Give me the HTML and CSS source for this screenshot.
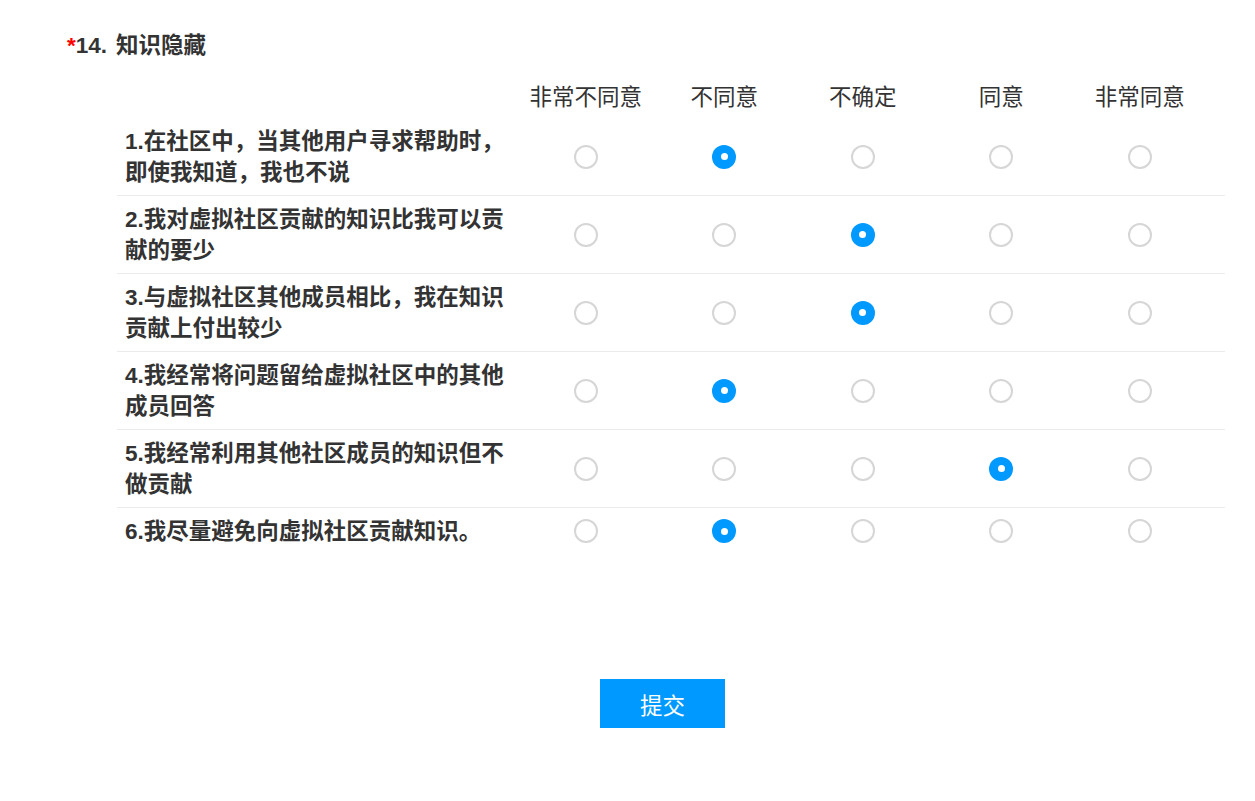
FILE: index.html
```html
<!DOCTYPE html>
<html lang="zh-CN">
<head>
<meta charset="utf-8">
<title>知识隐藏</title>
<link rel="stylesheet" href="styles.css">
</head>
<body>
<div class="page">
  <div class="title"><span class="req">*</span>14.<span class="title-text">知识隐藏</span></div>
  <div class="matrix">
    <div class="row head">
      <div class="label"></div>
      <div class="opt">非常不同意</div>
      <div class="opt">不同意</div>
      <div class="opt">不确定</div>
      <div class="opt">同意</div>
      <div class="opt">非常同意</div>
    </div>
    <div class="row item">
      <div class="label">1.在社区中，当其他用户寻求帮助时，即使我知道，我也不说</div>
      <div class="opt"><span class="radio"></span></div>
      <div class="opt"><span class="radio on"></span></div>
      <div class="opt"><span class="radio"></span></div>
      <div class="opt"><span class="radio"></span></div>
      <div class="opt"><span class="radio"></span></div>
    </div>
    <div class="row item">
      <div class="label">2.我对虚拟社区贡献的知识比我可以贡献的要少</div>
      <div class="opt"><span class="radio"></span></div>
      <div class="opt"><span class="radio"></span></div>
      <div class="opt"><span class="radio on"></span></div>
      <div class="opt"><span class="radio"></span></div>
      <div class="opt"><span class="radio"></span></div>
    </div>
    <div class="row item">
      <div class="label">3.与虚拟社区其他成员相比，我在知识贡献上付出较少</div>
      <div class="opt"><span class="radio"></span></div>
      <div class="opt"><span class="radio"></span></div>
      <div class="opt"><span class="radio on"></span></div>
      <div class="opt"><span class="radio"></span></div>
      <div class="opt"><span class="radio"></span></div>
    </div>
    <div class="row item">
      <div class="label">4.我经常将问题留给虚拟社区中的其他成员回答</div>
      <div class="opt"><span class="radio"></span></div>
      <div class="opt"><span class="radio on"></span></div>
      <div class="opt"><span class="radio"></span></div>
      <div class="opt"><span class="radio"></span></div>
      <div class="opt"><span class="radio"></span></div>
    </div>
    <div class="row item">
      <div class="label">5.我经常利用其他社区成员的知识但不做贡献</div>
      <div class="opt"><span class="radio"></span></div>
      <div class="opt"><span class="radio"></span></div>
      <div class="opt"><span class="radio"></span></div>
      <div class="opt"><span class="radio on"></span></div>
      <div class="opt"><span class="radio"></span></div>
    </div>
    <div class="row item last">
      <div class="label">6.我尽量避免向虚拟社区贡献知识。</div>
      <div class="opt"><span class="radio"></span></div>
      <div class="opt"><span class="radio on"></span></div>
      <div class="opt"><span class="radio"></span></div>
      <div class="opt"><span class="radio"></span></div>
      <div class="opt"><span class="radio"></span></div>
    </div>
  </div>
  <div class="footer">
    <button class="submit" type="button">提交</button>
  </div>
</div>
</body>
</html>
```

FILE: styles.css
```css
html, body {
  margin: 0;
  padding: 0;
  background: #fff;
}
body {
  font-family: "Liberation Sans", "Noto Sans CJK SC", sans-serif;
  color: #333;
}
.page {
  padding: 30px 0 0 67px;
}
.title {
  font-size: 22.5px;
  line-height: 31px;
  font-weight: bold;
  color: #333;
}
.title-text {
  margin-left: 9px;
}
.req {
  color: #f00;
}
.matrix {
  margin: 17px 0 0 50px;
  width: 1108px;
}
.row {
  display: grid;
  grid-template-columns: 399px repeat(5, 138.5px) 1fr;
  align-items: center;
}
.row.head {
  height: 40px;
  font-size: 22.5px;
  color: #333;
}
.row.head .opt {
  line-height: 40px;
}
.row.item {
  border-bottom: 1px solid #ebebeb;
}
.row.item.last {
  border-bottom: none;
}
.label {
  grid-column: 1;
  padding: 8px 4px 7px 8px;
  font-size: 22.5px;
  line-height: 31px;
  font-weight: bold;
  color: #333;
}
.opt {
  text-align: center;
  white-space: nowrap;
  display: flex;
  justify-content: center;
  align-items: center;
  padding-left: 1px;
}
.radio {
  box-sizing: border-box;
  width: 24px;
  height: 24px;
  border-radius: 50%;
  border: 2px solid #d6d6d6;
  background: #fff;
  display: flex;
  align-items: center;
  justify-content: center;
}
.radio.on {
  border: none;
  background: #0099ff;
}
.radio.on::after {
  content: "";
  width: 7px;
  height: 7px;
  border-radius: 50%;
  background: #fff;
}
.footer {
  display: flex;
  justify-content: center;
  margin: 125px -3px 0 0;
}
.submit {
  width: 125px;
  height: 49px;
  border: none;
  background: #0099ff;
  color: #fff;
  font-family: "Liberation Sans", "Noto Sans CJK SC", sans-serif;
  font-size: 22.5px;
  padding: 0;
  cursor: pointer;
}
```
